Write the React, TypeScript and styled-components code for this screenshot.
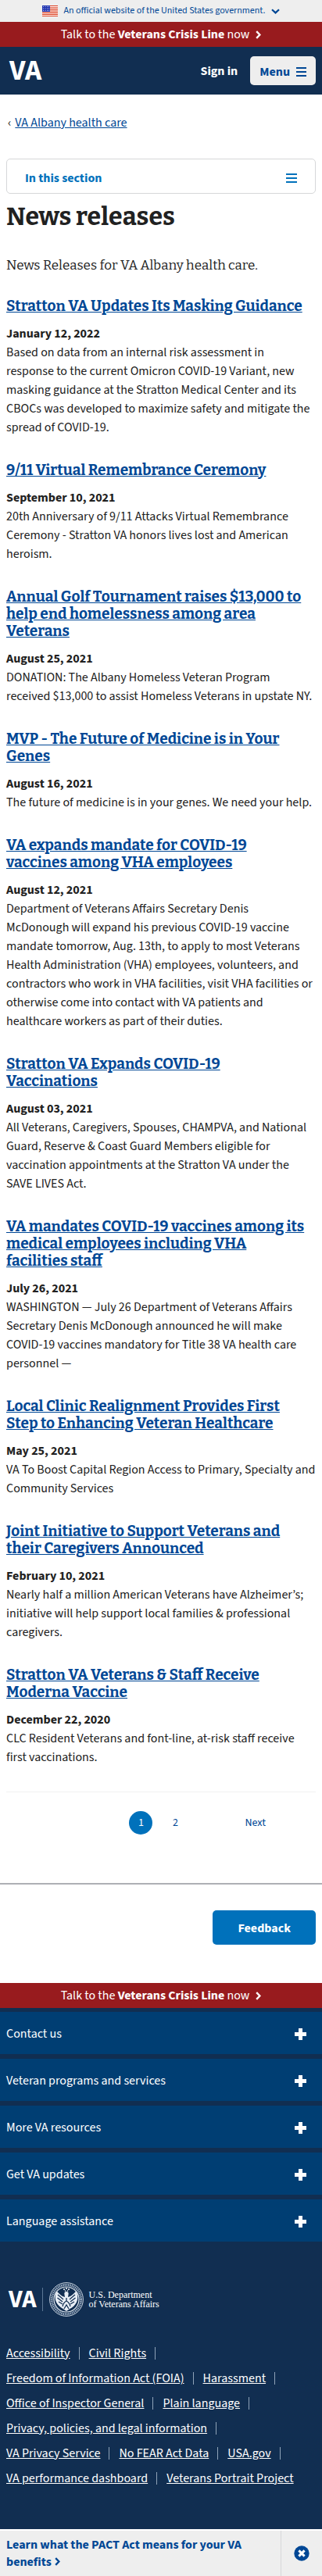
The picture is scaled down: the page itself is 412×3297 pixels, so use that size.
import React from 'react';
import styled, { createGlobalStyle } from 'styled-components';

const sans = '"Source Sans 3", "Noto Sans CJK SC", "Noto Sans", sans-serif';
const serif = 'Bitter, "DejaVu Serif", serif';

const color = {
  ink: '#212121',
  link: '#004795',
  primary: '#0071bb',
  navy: '#112e51',
  blue: '#003e73',
  red: '#981b1e',
  pale: '#eeeeee',
};

const GlobalStyle = createGlobalStyle`
  *, *::before, *::after { box-sizing: border-box; }
  body {
    margin: 0;
    background: #fff;
    color: ${color.ink};
    font: 400 16px/24px ${sans};
  }
  h1, h2, p, ul { margin: 0; padding: 0; }
  ul { list-style: none; }
  button { font: inherit; border: 0; padding: 0; margin: 0; cursor: pointer; }
  svg { display: block; flex: none; }
`;

const GovBanner = styled.button`
  display: flex;
  align-items: center;
  justify-content: center;
  gap: 8px;
  width: 100%;
  height: 28px;
  background: ${color.pale};
  color: ${color.link};
  && { font-size: 12px; }
`;

const CrisisLine = styled.button`
  display: flex;
  align-items: center;
  justify-content: center;
  gap: 8px;
  width: 100%;
  height: 32px;
  background: ${color.red};
  color: #fff;
`;

const Header = styled.header`
  display: flex;
  align-items: center;
  justify-content: space-between;
  padding: 12px 8px 12px 12px;
  background: ${color.navy};
`;

const Wordmark = styled.a<{ $size: number }>`
  color: #fff;
  font-size: ${p => p.$size}px;
  line-height: ${p => p.$size}px;
  font-weight: 700;
  text-decoration: none;
`;

const HeaderActions = styled.div`
  display: flex;
  align-items: center;
  gap: 16px;
`;

const SignIn = styled.button`
  background: none;
  color: #fff;
  && { font-weight: 700; }
`;

const MenuButton = styled.button`
  display: flex;
  align-items: center;
  gap: 8px;
  height: 37px;
  && { padding: 2px 12px 0; font-weight: 700; }
  border-radius: 5px;
  background: ${color.pale};
  color: ${color.link};
`;

const Main = styled.main`
  padding: 24px 8px 0;
`;

const Breadcrumb = styled.nav`
  display: flex;
  gap: 5px;
  padding: 0 2px 34px;
`;

const TextLink = styled.a`
  color: ${color.link};
  text-decoration: underline;
`;

const SectionToggle = styled.button`
  display: flex;
  align-items: center;
  justify-content: space-between;
  width: 100%;
  height: 45px;
  && { padding: 4px 23px 0; border: 1px solid #d6d7d9; font-weight: 700; }
  border-radius: 5px;
  background: #fff;
  color: ${color.primary};
`;

const Title = styled.h1`
  padding-top: 8px;
  font: 700 32px/42px ${serif};
`;

const Intro = styled.p`
  padding: 29px 0 28px;
  font: 400 17px/26px ${serif};
`;

const Story = styled.article`
  padding-bottom: 32px;
  white-space: pre-line;
`;

const StoryTitle = styled.h2`
  margin-bottom: 12px;
  font: 700 19px/22px ${serif};
`;

const StoryDate = styled.p`
  font-weight: 700;
`;

const Pagination = styled.nav`
  display: flex;
  align-items: center;
  justify-content: flex-end;
  gap: 14px;
  padding: 24px 58px 62px 0;
  border-top: 1px solid #f1f1f1;
`;

const PageLink = styled.a<{ $current?: boolean }>`
  display: grid;
  place-items: center;
  min-width: 30px;
  height: 30px;
  border-radius: 15px;
  background: ${p => (p.$current ? color.primary : 'transparent')};
  color: ${p => (p.$current ? '#fff' : color.link)};
  font-size: 14px;
  text-decoration: none;
`;

const NextLink = styled(PageLink)`
  margin-left: 54px;
  padding: 0 6px;
`;

const FeedbackBar = styled.section`
  display: flex;
  justify-content: flex-end;
  padding: 33px 8px 49px;
  border-top: 2px solid #aeb0b5;
`;

const FeedbackButton = styled.button`
  height: 44px;
  && { padding: 2px 32px 0; font-weight: 700; }
  border-radius: 5px;
  background: ${color.primary};
  color: #fff;
`;

const Footer = styled.footer`
  background: ${color.navy};
  color: #fff;
`;

const Accordion = styled.ul`
  display: grid;
  gap: 6px;
  padding-top: 5px;
`;

const AccordionButton = styled.button`
  display: flex;
  align-items: center;
  justify-content: space-between;
  width: 100%;
  height: 54px;
  && { padding: 2px 20px 0 8px; }
  background: ${color.blue};
  color: #fff;
`;

const Brand = styled.div`
  display: flex;
  align-items: center;
  padding: 52px 11px 31px;
`;

const BrandRule = styled.span`
  width: 1px;
  height: 30px;
  margin: 0 8px 0 7px;
  background: #5b7795;
`;

const BrandName = styled.span`
  margin-left: 7px;
  font: 400 12px/12px "Liberation Serif", serif;
`;

const FooterLinks = styled.ul`
  display: flex;
  flex-wrap: wrap;
  padding: 0 8px 49px;
  line-height: 32px;

  li { display: flex; }
  li:not(:last-child)::after {
    content: '';
    align-self: center;
    width: 1px;
    height: 16px;
    margin: 0 12px 0 11px;
    background: #8fa3b8;
  }
  a { color: #fff; }
`;

const Promo = styled.aside`
  display: flex;
  border-top: 2px solid #fff;
  background: ${color.pale};
`;

const PromoLink = styled.a`
  flex: 1;
  padding: 7px 8px;
  color: ${color.link};
  font-weight: 700;
  line-height: 22px;
  text-decoration: none;

  svg { display: inline-block; margin-left: 4px; }
`;

const PromoClose = styled.button`
  display: grid;
  place-items: center;
  width: 53px;
  && { border-left: 1px solid #d6d7d9; }
  background: ${color.pale};
`;

const ArrowRight = () => (
  <svg width="7" height="11" viewBox="0 0 7 11" fill="none" stroke="currentColor" strokeWidth="2.4" aria-hidden="true">
    <path d="M1.200 1.200 5.400 5.500 1.200 9.800" />
  </svg>
);

const ArrowDown = () => (
  <svg width="11" height="7" viewBox="0 0 11 7" fill="none" stroke="currentColor" strokeWidth="2.2" aria-hidden="true">
    <path d="M1 1.200 5.500 5.400 10 1.200" />
  </svg>
);

const Bars = ({ width }: { width: number }) => (
  <svg width={width} height="12" viewBox={`0 0 ${width} 12`} fill="currentColor" aria-hidden="true">
    <path d={`M0 0h${width}v2H0zM0 5h${width}v2H0zM0 10h${width}v2H0z`} />
  </svg>
);

const Plus = () => (
  <svg width="15" height="15" viewBox="0 0 15 15" fill="#fff" aria-hidden="true">
    <path d="M5 0h5v5h5v5h-5v5H5v-5H0V5h5z" />
  </svg>
);

const Flag = () => (
  <svg width="20" height="14" viewBox="0 0 20 14" aria-hidden="true">
    <path fill="#fff" d="M0 0h20v14H0z" />
    <path fill="#db3e1f" d="M0 0h20v1.100H0zM0 2.200h20v1.100H0zM0 4.300h20v1.100H0zM0 6.500h20v1.100H0zM0 8.600h20v1.100H0zM0 10.800h20v1.100H0zM0 12.900h20V14H0z" />
    <path fill="#1e33b1" d="M0 0h10v8H0z" />
    <g fill="#fff">
      {[1.5, 4, 6.5].map(y => [1.5, 4, 6.5, 8.7].map(x => <circle key={`${x}-${y}`} cx={x} cy={y} r="0.500" />))}
    </g>
  </svg>
);

const Seal = () => (
  <svg width="44" height="44" viewBox="0 0 44 44" fill="none" aria-hidden="true">
    <circle cx="22" cy="22" r="21.400" stroke="#c8d3df" strokeWidth="1" />
    <circle cx="22" cy="22" r="18.700" stroke="#9fb0c4" strokeWidth="3" strokeDasharray="1.400 0.900" />
    <circle cx="22" cy="22" r="16" stroke="#e6edf4" strokeWidth="1.200" />
    <path fill="#e8eef5" d="M22 12c2 0 3 1.500 2.600 3.200L24 19l3-1c3-2 5.600-4.400 7.400-6.500 2.200 4 2.600 9.500.6 14-1.600 3.600-5 6.600-8.600 8.600L22 37l-4.400-2.900C14 32 10.600 29 9 25.500c-2-4.500-1.600-10 .6-14 1.800 2.100 4.400 4.500 7.400 6.500l3 1-.6-3.800C19 13.500 20 12 22 12z" />
    <g stroke="#112e51" strokeWidth="1.300">
      <path d="m11 16 7 6M10.500 20l6.500 5M12 25l5 3M33 16l-7 6M33.500 20 27 25M32 25l-5 3" />
      <path d="M17 31c1-4 3-6 5-7 2 1 4 3 5 7M22 20v4M19 34l3-5 3 5" />
    </g>
    <g fill="#fff">
      <circle cx="19" cy="9" r="1" /><circle cx="22" cy="8" r="1" /><circle cx="25" cy="9" r="1" />
      <circle cx="20.500" cy="11" r="0.800" /><circle cx="23.500" cy="11" r="0.800" />
    </g>
  </svg>
);

const CloseIcon = () => (
  <svg width="20" height="20" viewBox="0 0 20 20" aria-hidden="true">
    <circle cx="10" cy="10" r="9.700" fill={color.link} />
    <path d="m6.400 6.400 7.200 7.200M13.600 6.400l-7.200 7.200" stroke="#fff" strokeWidth="3" />
  </svg>
);

const CrisisButton = () => (
  <CrisisLine type="button">
    <span>Talk to the <b>Veterans Crisis Line</b> now</span>
    <ArrowRight />
  </CrisisLine>
);

const stories = [
  { title: 'Stratton VA Updates Its Masking Guidance', date: 'January 12, 2022', text: 'Based on data from an internal risk assessment in\nresponse to the current Omicron COVID-19 Variant, new\nmasking guidance at the Stratton Medical Center and its\nCBOCs was developed to maximize safety and mitigate the\nspread of COVID-19.' },
  { title: '9/11 Virtual Remembrance Ceremony', date: 'September 10, 2021', text: '20th Anniversary of 9/11 Attacks Virtual Remembrance Ceremony - Stratton VA honors lives lost and American heroism.' },
  { title: 'Annual Golf Tournament raises $13,000 to help end homelessness among area\nVeterans', date: 'August 25, 2021', text: 'DONATION: The Albany Homeless Veteran Program received $13,000 to assist Homeless Veterans in upstate NY.' },
  { title: 'MVP - The Future of Medicine is in Your\nGenes', date: 'August 16, 2021', text: 'The future of medicine is in your genes. We need your help.' },
  { title: 'VA expands mandate for COVID-19\nvaccines among VHA employees', date: 'August 12, 2021', text: 'Department of Veterans Affairs Secretary Denis\nMcDonough will expand his previous COVID-19 vaccine\nmandate tomorrow, Aug. 13th, to apply to most Veterans\nHealth Administration (VHA) employees, volunteers, and\ncontractors who work in VHA facilities, visit VHA facilities or\notherwise come into contact with VA patients and\nhealthcare workers as part of their duties.' },
  { title: 'Stratton VA Expands COVID-19\nVaccinations', date: 'August 03, 2021', text: 'All Veterans, Caregivers, Spouses, CHAMPVA, and National Guard, Reserve & Coast Guard Members eligible for vaccination appointments at the Stratton VA under the SAVE LIVES Act.' },
  { title: 'VA mandates COVID-19 vaccines among its\nmedical employees including VHA\nfacilities staff', date: 'July 26, 2021', text: 'WASHINGTON — July 26 Department of Veterans Affairs Secretary Denis McDonough announced he will make COVID-19 vaccines mandatory for Title 38 VA health care personnel —' },
  { title: 'Local Clinic Realignment Provides First\nStep to Enhancing Veteran Healthcare', date: 'May 25, 2021', text: 'VA To Boost Capital Region Access to Primary, Specialty and Community Services' },
  { title: 'Joint Initiative to Support Veterans and\ntheir Caregivers Announced', date: 'February 10, 2021', text: 'Nearly half a million American Veterans have Alzheimer’s; initiative will help support local families & professional caregivers.' },
  { title: 'Stratton VA Veterans & Staff Receive\nModerna Vaccine', date: 'December 22, 2020', text: 'CLC Resident Veterans and font-line, at-risk staff receive first vaccinations.' },
];

const sections = ['Contact us', 'Veteran programs and services', 'More VA resources', 'Get VA updates', 'Language assistance'];

const footerLinks = [
  'Accessibility', 'Civil Rights', 'Freedom of Information Act (FOIA)', 'Harassment',
  'Office of Inspector General', 'Plain language', 'Privacy, policies, and legal information',
  'VA Privacy Service', 'No FEAR Act Data', 'USA.gov', 'VA performance dashboard', 'Veterans Portrait Project',
];

export default function App() {
  return (
    <>
      <GlobalStyle />
      <GovBanner type="button">
        <Flag />
        <span>An official website of the United States government.</span>
        <ArrowDown />
      </GovBanner>
      <CrisisButton />
      <Header>
        <Wordmark href="#" $size={37}>VA</Wordmark>
        <HeaderActions>
          <SignIn type="button">Sign in</SignIn>
          <MenuButton type="button">Menu <Bars width={13} /></MenuButton>
        </HeaderActions>
      </Header>

      <Main>
        <Breadcrumb aria-label="Breadcrumb">
          <span aria-hidden="true">‹</span>
          <TextLink href="#">VA Albany health care</TextLink>
        </Breadcrumb>
        <SectionToggle type="button">In this section <Bars width={14} /></SectionToggle>
        <Title>News releases</Title>
        <Intro>News Releases for VA Albany health care.</Intro>
        {stories.map(s => (
          <Story key={s.title}>
            <StoryTitle><TextLink href="#">{s.title}</TextLink></StoryTitle>
            <StoryDate>{s.date}</StoryDate>
            <p>{s.text}</p>
          </Story>
        ))}
        <Pagination aria-label="Pagination">
          <PageLink href="#" $current aria-current="page">1</PageLink>
          <PageLink href="#">2</PageLink>
          <NextLink href="#">Next</NextLink>
        </Pagination>
      </Main>

      <FeedbackBar>
        <FeedbackButton type="button">Feedback</FeedbackButton>
      </FeedbackBar>

      <Footer>
        <CrisisButton />
        <Accordion>
          {sections.map(s => (
            <li key={s}><AccordionButton type="button">{s}<Plus /></AccordionButton></li>
          ))}
        </Accordion>
        <Brand>
          <Wordmark href="#" $size={32}>VA</Wordmark>
          <BrandRule />
          <Seal />
          <BrandName>U.S. Department<br />of Veterans Affairs</BrandName>
        </Brand>
        <FooterLinks>
          {footerLinks.map(l => <li key={l}><a href="#">{l}</a></li>)}
        </FooterLinks>
      </Footer>
      <Promo>
        <PromoLink href="#">Learn what the PACT Act means for your VA benefits<ArrowRight /></PromoLink>
        <PromoClose type="button" aria-label="Close"><CloseIcon /></PromoClose>
      </Promo>
    </>
  );
}
